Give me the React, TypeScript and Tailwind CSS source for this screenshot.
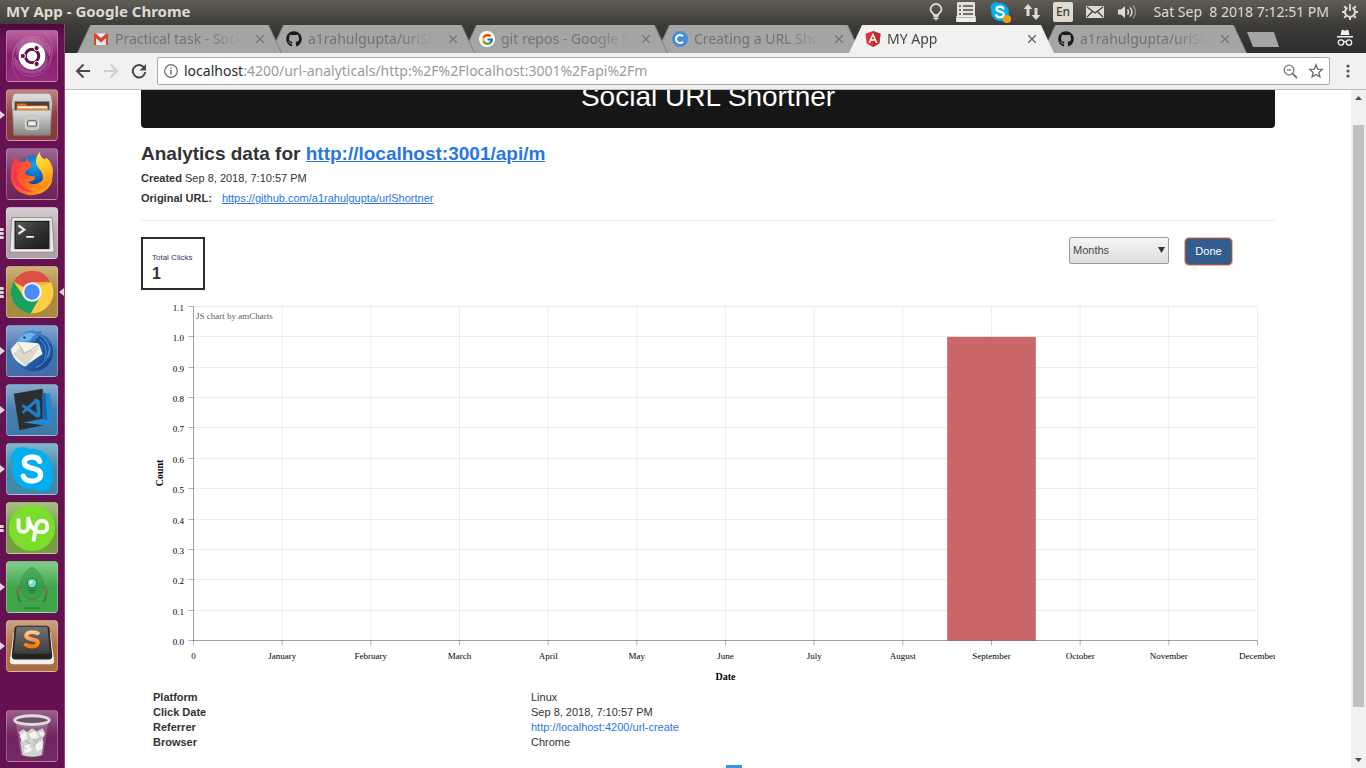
import React from "react";
import { FaGithub } from "react-icons/fa";
import { FcGoogle } from "react-icons/fc";

/* ---------- Launcher artwork, each on a 52 x 52 tile ---------- */

function DashArt() {
  return (
    <svg viewBox="0 0 52 52" className="size-full" aria-hidden="true">
      <g fill="none" stroke="#fff">
        <path d="M8 37C2 22 10 6 28 6c12 0 18 10 16 20" strokeOpacity=".22" />
        <path d="M44 15c6 16-2 31-18 32C14 47 8 38 8 28" strokeOpacity=".22" />
        <path d="M14 52C2 40 2 18 18 9" strokeOpacity=".16" />
        <path d="M38 0c12 10 14 30-4 42" strokeOpacity=".16" />
      </g>
      <path d="M10 26C8 12 20 5 32 8c9 3 13 11 12 18C36 10 20 8 10 26Z" fill="#fff" fillOpacity=".16" />
      <path d="M42 26c2 14-10 21-22 18C11 41 7 33 8 26c8 16 24 18 34 0Z" fill="#fff" fillOpacity=".16" />
      <circle cx="26" cy="27" r="14.4" fill="#3b0a31" fillOpacity=".3" />
      <circle cx="26" cy="26" r="14" fill="#fff" />
      <circle cx="26" cy="26" r="7" fill="none" stroke="#5e1448" strokeWidth="3.2" />
      <g fill="#5e1448" stroke="#fff" strokeWidth="1">
        <circle cx="16.5" cy="26" r="2.7" />
        <circle cx="30.8" cy="17.8" r="2.7" />
        <circle cx="30.8" cy="34.2" r="2.7" />
      </g>
    </svg>
  );
}

function FilesArt() {
  return (
    <svg viewBox="0 0 52 52" className="size-full" aria-hidden="true">
      <defs>
        <linearGradient id="cab" x1="0" y1="0" x2="0" y2="1">
          <stop offset="0" stopColor="#dededc" />
          <stop offset="1" stopColor="#868683" />
        </linearGradient>
      </defs>
      <path d="M9 4h34q2 0 3 3l1 8-2 31H7L5 15l1-8q1-3 3-3Z" fill="url(#cab)" />
      <path d="M8 12h36v12H8z" fill="#4c4038" />
      <path d="M10 15q0-1 1-1h8l2 2h21v7H10z" fill="#d96b22" />
      <path d="M11 17h31v5H11z" fill="#fff3dc" />
      <path d="M10 19h33v4H10z" fill="#e88a3b" />
      <path d="M6 21h40l-1 26H7z" fill="url(#cab)" stroke="#858582" strokeWidth=".6" />
      <rect x="19" y="29" width="14" height="12" rx="2.5" fill="#c2c2c0" stroke="#dcdcda" />
      <rect x="21.5" y="32" width="9" height="5.5" rx="1" fill="#efefed" stroke="#4c4c4a" />
    </svg>
  );
}

function FirefoxArt() {
  return (
    <svg viewBox="0 0 52 52" className="size-full" aria-hidden="true">
      <defs>
        <radialGradient id="ffGlobe" cx=".55" cy=".3" r=".7">
          <stop offset="0" stopColor="#12a5f4" />
          <stop offset="1" stopColor="#0b3c9c" />
        </radialGradient>
        <linearGradient id="ffBody" x1="0" y1=".3" x2="1" y2=".7">
          <stop offset="0" stopColor="#ff3647" />
          <stop offset=".5" stopColor="#ff6a1f" />
          <stop offset="1" stopColor="#ffb21a" />
        </linearGradient>
        <linearGradient id="ffTail" x1="0" y1="0" x2=".3" y2="1">
          <stop offset="0" stopColor="#fff36b" />
          <stop offset=".5" stopColor="#ffcb1f" />
          <stop offset="1" stopColor="#ff8a16" />
        </linearGradient>
      </defs>
      <circle cx="27" cy="23" r="16" fill="url(#ffGlobe)" />
      <path d="M9 8c1 2 2 4 4 6 2-1 4-1 6-1 0-2 1-4 2-5 0 3 1 5 3 6l2 4-4 3c-2 1-4 3-3 5 2 2 5 2 8 2 2 0 3 2 1 4-2 2-4 2-6 2 4 5 14 2 17-5 3-5 3-9 2-13 5 5 8 13 5 20-4 8-12 12-20 12C14 48 4 40 4 28c0-7 1-14 5-20Z" fill="url(#ffBody)" />
      <path d="M34 3c-5 6-5 12-1 17 4 4 5 8 4 13-2 6-8 9-14 8 8 5 19 1 23-8 4-10 1-19-5-24l-2 2c-3-2-5-5-5-8Z" fill="url(#ffTail)" />
      <path d="M9 21c-1 12 8 22 20 23-12 2-22-4-23-16 0-3 1-5 3-7Z" fill="#ed2460" fillOpacity=".6" />
    </svg>
  );
}

function TerminalArt() {
  return (
    <svg viewBox="0 0 52 52" className="size-full" aria-hidden="true">
      <defs>
        <linearGradient id="term" x1="0" y1="0" x2="1" y2="1">
          <stop offset="0" stopColor="#5c5c5a" />
          <stop offset=".5" stopColor="#333" />
          <stop offset="1" stopColor="#1b1b1b" />
        </linearGradient>
      </defs>
      <path d="M5 10h42l2 36H3z" fill="#e9e9e6" stroke="#7d7a7d" strokeWidth=".8" />
      <rect x="7" y="13" width="38" height="30" fill="#b4b4b1" />
      <rect x="8.5" y="14" width="35" height="28" fill="url(#term)" stroke="#111" />
      <path d="m12 18 6 4.500-6 4.500" fill="none" stroke="#f2f2f2" strokeWidth="2.2" />
      <path d="M20 30h8" stroke="#f2f2f2" strokeWidth="2" />
    </svg>
  );
}

function ChromeArt() {
  return (
    <svg viewBox="0 0 52 52" className="size-full" aria-hidden="true">
      <circle cx="26" cy="26" r="22" fill="#ffcd41" />
      <path d="M26 26 6.900 15A22 22 0 0 1 45.700 16H26Z" fill="#dd5144" />
      <path d="M17.300 31 6.900 15A22 22 0 0 0 25 48l9.700-17-8.700 5Z" fill="#1ba15f" />
      <path d="M26 16h19.700A22 22 0 0 1 25 48l9.700-17Z" fill="#ffcd41" />
      <path d="M26 16h19.700l-10 3.500Z" fill="#d6a52c" fillOpacity=".5" />
      <circle cx="26" cy="26" r="10.2" fill="#f4f4f4" />
      <circle cx="26" cy="26" r="8" fill="#4c8bf5" />
    </svg>
  );
}

function ThunderbirdArt() {
  return (
    <svg viewBox="0 0 52 52" className="size-full" aria-hidden="true">
      <defs>
        <linearGradient id="tb" x1="0" y1="0" x2="1" y2="1">
          <stop offset="0" stopColor="#5fa9e2" />
          <stop offset=".5" stopColor="#2a6fbe" />
          <stop offset="1" stopColor="#12306f" />
        </linearGradient>
      </defs>
      <path d="M12 13C15 6 25 2 31 6l5-1-1 3c8 2 13 10 13 18 0 12-9 21-20 21-10 0-20-7-22-17l3 3c-3-8-1-14 3-20Z" fill="url(#tb)" />
      <path d="m4 24 7-8 22 2 4 11-19 13C10 38 5 32 4 24Z" fill="#f5f3ec" />
      <path d="m6 29 9-8 3 6 16-5-14 20Z" fill="#ddd9ce" />
      <path d="m11 17 7 12 16-10" fill="none" stroke="#aaa69b" strokeWidth=".8" />
      <path d="M33 10c10 5 13 14 10 22-2 6-8 11-15 11 8-5 12-11 10-18-1-6-6-8-13-8 3-1 6-2 8-7Z" fill="#1d519a" />
      <path d="M37 12c7 6 9 14 6 21M34 14c7 5 8 13 5 20M40 35c-2 4-6 7-10 8M45 22l-4 13" fill="none" stroke="#5ba3dd" strokeWidth=".9" />
      <path d="M12 15c3-7 12-10 18-6-4 1-4 4-7 6-3 2-8 0-11 0Z" fill="#6bb6e9" />
      <circle cx="18" cy="12" r="1.2" fill="#102c5c" />
    </svg>
  );
}

function CodeArt() {
  return (
    <svg viewBox="0 0 52 52" className="size-full" aria-hidden="true">
      <path d="m7 9 30-5 4 37-28 6Z" fill="#2e2e30" />
      <path d="m37 8 8 1 3 29-8 4-23-3 20-4Z" fill="#2489d4" />
      <path d="m37 8 3 1 2 28-5-2Z" fill="#1767a8" />
      <path d="m30 14 4 2 1 17-4 1-16-12 2-2 14 9-1-10-13 11-2-2Z" fill="#1c7fca" />
    </svg>
  );
}

function SkypeArt() {
  return (
    <svg viewBox="0 0 52 52" className="size-full" aria-hidden="true">
      <circle cx="16" cy="15" r="12" fill="#00aff0" />
      <circle cx="36" cy="37" r="12" fill="#00aff0" />
      <circle cx="26" cy="26" r="21" fill="#00aff0" />
      <path d="M34 18c-1-3-4-4.500-8-4.500-4.500 0-8 2-8 5.500 0 8.500 17 4 17 13 0 4-4 6.500-9 6.500s-8-2-9-5" fill="none" stroke="#fff" strokeWidth="5.5" strokeLinecap="round" />
    </svg>
  );
}

function UpworkArt() {
  return (
    <svg viewBox="0 0 52 52" className="size-full" aria-hidden="true">
      <circle cx="26" cy="26" r="24" fill="#7ade2a" />
      <g fill="none" stroke="#fff" strokeWidth="4" strokeLinejoin="round">
        <path d="M12 16v8.500c0 3.500 2 5.500 5 5.500s5.200-2 5.200-5.500V16c1.500 6 3.500 10 6.800 12.300 2.500 1.700 4.800 2.200 7 2.200 3.400 0 6-2.500 6-6s-2.300-6-5.600-6c-3.600 0-5.600 2.700-6.400 6.700L27.500 40" />
      </g>
    </svg>
  );
}

function RobotArt() {
  return (
    <svg viewBox="0 0 52 52" className="size-full" aria-hidden="true">
      <ellipse cx="26" cy="48" rx="9" ry="1.3" fill="#2f8a3f" />
      <path d="M14 25c-4 3-4 9-1 12M38 25c4 3 4 9 1 12" fill="none" stroke="#77704a" strokeWidth="2.6" />
      <path d="M26 5c8 5 12 12 12 19 0 9-5 15-12 15s-12-6-12-15c0-7 4-14 12-19Z" fill="#2f9a43" fillOpacity=".55" stroke="#379648" strokeOpacity=".6" />
      <path d="M14.500 25c7 4 16 4 23 0" fill="none" stroke="#328f44" />
      <path d="M21 37c2 4 8 4 10 0-3 2-7 2-10 0Z" fill="#77704a" />
      <circle cx="26" cy="22" r="5.5" fill="#2a7a4c" />
      <circle cx="26" cy="22" r="4.2" fill="#77dcc0" />
      <circle cx="25" cy="21" r="1.5" fill="#e0fff4" />
      <path d="M22 29.500h8M23.500 31.500h5" stroke="#1f6f33" />
      <path d="M12 36q-1 4 3 5M40 36q1 4-3 5" fill="none" stroke="#2b8a3e" strokeWidth="2" />
    </svg>
  );
}

function SublimeArt() {
  return (
    <svg viewBox="0 0 52 52" className="size-full" aria-hidden="true">
      <defs>
        <linearGradient id="key" x1="0" y1="0" x2="0" y2="1">
          <stop offset="0" stopColor="#737373" />
          <stop offset="1" stopColor="#3c3c3c" />
        </linearGradient>
        <linearGradient id="ess" x1="0" y1="0" x2="0" y2="1">
          <stop offset="0" stopColor="#ffc98a" />
          <stop offset="1" stopColor="#ff7a00" />
        </linearGradient>
      </defs>
      <path d="M7 12h38l4 29q0 4-4 4H7q-4 0-4-4Z" fill="#f3f3f3" />
      <path d="M8 7q1-2 3-2h30q2 0 3 2l3 29q0 4-3 4H8q-3 0-3-4Z" fill="#232323" />
      <path d="M10 6h32l3 28H7Z" fill="url(#key)" />
      <path d="M33 14c-2-3-12-4-13 1-1 5 13 3 12 8-1 5-10 4-14 1" fill="none" stroke="url(#ess)" strokeWidth="4" />
    </svg>
  );
}

function TrashArt() {
  return (
    <svg viewBox="0 0 52 52" className="size-full" aria-hidden="true">
      <path d="M9 11h34l-5 35q-12 4-24 0Z" fill="#e8dbe6" fillOpacity=".22" />
      <path d="m12 22 5-3 4 3 5-4 5 3 6-3 3 6-3 4 1 5-2 13q-10 3-20 0l-2-12 1-7Z" fill="#d2d2d0" />
      <path d="m13 26 6-5 2 7-5 4Zm10-2 6-3 4 6-7 3Zm-6 13 6-3 3 7-7 3Zm12-2 7-4 1 8-6 3ZM32 23l6-2v6Z" fill="#f4f4f2" />
      <path d="m19 31 5 3m2-5 5 3-3 5m-12-1 4 4m11-9 5-4" fill="none" stroke="#a8a8a6" />
      <ellipse cx="26" cy="9.5" rx="18" ry="4.5" fill="#71506a" stroke="#dededc" strokeWidth="3" />
      <path d="M10 14q16 6 32 0" fill="none" stroke="#8d8d8b" />
    </svg>
  );
}

type Tile = {
  name: string;
  art: () => React.JSX.Element;
  tone: string;
  windows: number;
  active?: boolean;
};

const tiles: Tile[] = [
  { name: "Dash", art: DashArt, tone: "from-[#b9629f] via-[#8c1f72] to-[#932b7c]", windows: 0 },
  { name: "Files", art: FilesArt, tone: "from-[#c08484] via-[#8f3d45] to-[#8a3a44]", windows: 1 },
  { name: "Firefox", art: FirefoxArt, tone: "from-[#9d6a94] via-[#7a3469] to-[#6d2259]", windows: 0 },
  { name: "Terminal", art: TerminalArt, tone: "from-[#d5cdd4] via-[#b5a8b3] to-[#ada0ab]", windows: 3 },
  { name: "Google Chrome", art: ChromeArt, tone: "from-[#cbb279] via-[#ad8c40] to-[#a98a42]", windows: 3, active: true },
  { name: "Thunderbird", art: ThunderbirdArt, tone: "from-[#86a8cf] via-[#4675ae] to-[#3f6ca6]", windows: 1 },
  { name: "Visual Studio Code", art: CodeArt, tone: "from-[#84abcb] via-[#4580ae] to-[#3d78a8]", windows: 1 },
  { name: "Skype", art: SkypeArt, tone: "from-[#83b3c9] via-[#448bab] to-[#4187a7]", windows: 1 },
  { name: "Upwork", art: UpworkArt, tone: "from-[#a9bf81] via-[#779f44] to-[#769c46]", windows: 2 },
  { name: "Robot", art: RobotArt, tone: "from-[#83cb8c] via-[#3fa64e] to-[#3fa548]", windows: 1 },
  { name: "Sublime Text", art: SublimeArt, tone: "from-[#cfa284] via-[#ad7345] to-[#a86d42]", windows: 1 },
];

function LauncherTile({ tile }: { tile: Tile }) {
  const Art = tile.art;
  return (
    <div className="relative flex w-full pl-1.5">
      {tile.windows > 0 && (
        <span className="absolute inset-y-0 left-0 flex flex-col justify-center gap-px">
          {tile.windows === 1 ? (
            <span className="h-2 w-[5px] bg-[#dcd6da] [clip-path:polygon(0_0,100%_50%,0_100%)]" />
          ) : (
            Array.from({ length: tile.windows }, (_, i) => (
              <span key={i} className="h-[3px] w-1 rounded-r-sm bg-[#dcd6da]" />
            ))
          )}
        </span>
      )}
      <button
        type="button"
        aria-label={tile.name}
        className={`size-[52px] overflow-hidden rounded border border-white/25 bg-linear-to-b ${tile.tone}`}
      >
        <Art />
      </button>
      {tile.active && (
        <span className="absolute inset-y-0 right-0 flex items-center">
          <span className="h-2 w-[5px] bg-[#dcd6da] [clip-path:polygon(100%_0,0_50%,100%_100%)]" />
        </span>
      )}
    </div>
  );
}

function Launcher() {
  return (
    <nav aria-label="Launcher" className="flex w-[65px] shrink-0 flex-col gap-[7px] border-r border-[#8a4a78] bg-linear-to-b from-[#4a0c3b] via-[#651152] via-2% to-[#651152] py-1.5">
      {tiles.map((t) => (
        <LauncherTile key={t.name} tile={t} />
      ))}
      <div className="mt-auto">
        <LauncherTile tile={{ name: "Trash", art: TrashArt, tone: "from-[#9b5e8d] via-[#72235f] to-[#742a63]", windows: 0 }} />
      </div>
    </nav>
  );
}

/* ---------- Desktop panel ---------- */

function DesktopPanel() {
  return (
    <header className="flex h-6 shrink-0 items-center justify-between bg-linear-to-b from-[#5f5d53] to-[#3e3d39] pr-[7px] pl-1.5 font-['Noto_Sans',sans-serif] text-sm text-[#dfdbd2]">
      <span className="text-[15px] font-bold whitespace-nowrap">MY App - Google Chrome</span>
      <div className="flex items-center gap-3">
        <svg viewBox="0 0 14 18" className="h-[18px] w-3.5" fill="none" stroke="currentColor" aria-hidden="true">
          <path d="M5 12C4 10 1.500 9 1.500 6.500a5.500 5.500 0 0 1 11 0C12.500 9 10 10 9 12Z" strokeWidth="1.8" />
          <path d="M4.500 13.500h5M4.500 15.500h5" strokeWidth="1.5" />
          <path d="M6 17h2" />
        </svg>
        <svg viewBox="0 0 22 20" className="h-5 w-[22px]" aria-hidden="true">
          <path d="M3 0h16q1 0 1 1v13H2V1q0-1 1-1Z" fill="#e4e1db" />
          <path d="M1.500 14h19l.5 5q0 1-1 1H2q-1 0-1-1Z" fill="#f0eeea" />
          <path d="M4 4h2M4 8h2M4 12h2M8 4h10M8 8h10M8 12h10" stroke="#4c4b46" strokeWidth="1.4" />
          <path d="M3 15.500h16" stroke="#b9b6b0" />
        </svg>
        <span className="relative flex size-[22px]">
          <SkypeArt />
          <span className="absolute right-0 bottom-0 size-2 rounded-full bg-[#f8a00c]" />
        </span>
        <svg viewBox="0 0 18 18" className="size-[18px]" fill="currentColor" aria-hidden="true">
          <path d="M5 1 9.500 6H6.500v7h-3V6H.5ZM13 17l4.500-5h-3V5h-3v7h-3Z" />
        </svg>
        <span className="flex h-5 w-5 items-center justify-center rounded-xs bg-[#dfdbd2] text-xs font-medium text-[#3e3d39]">En</span>
        <svg viewBox="0 0 20 14" className="h-3.5 w-5" aria-hidden="true">
          <rect x="1" y="1" width="18" height="12" rx="1" fill="#dfdbd2" />
          <path d="m2 2 8 6 8-6M2 12l5.500-5.500M18 12l-5.500-5.500" fill="none" stroke="#3e3d39" strokeWidth="1.2" />
        </svg>
        <svg viewBox="0 0 21 16" className="h-4 w-[21px]" fill="none" stroke="currentColor" aria-hidden="true">
          <path d="M1 5.500h3l4-3.500v12l-4-3.500H1Z" fill="currentColor" stroke="none" />
          <path d="M10.500 5.500q2 2.500 0 5" strokeWidth="1.5" />
          <path d="M13 3.500q4 4.500 0 9" strokeWidth="1.5" />
          <path d="M16 1.500q5 6.500 0 13" strokeWidth="1.5" opacity=".45" />
        </svg>
        <time className="min-w-[179px] text-right whitespace-pre">Sat Sep  8 2018 7:12:51 PM</time>
        <svg viewBox="0 0 18 18" className="size-[18px]" fill="none" stroke="currentColor" aria-hidden="true">
          <path d="M6.500 4.600a5 5 0 1 0 5 0" strokeWidth="2" />
          <path d="M9 1v7" strokeWidth="1.8" />
          <path d="M3.200 3.200l1.800 1.800M14.800 3.200 13 5M1 9h2.500M14.500 9H17M3.200 14.800 5 13M14.800 14.800 13 13M9 14.500V17" strokeWidth="2" />
        </svg>
      </div>
    </header>
  );
}

/* ---------- Browser chrome ---------- */

function GmailIcon() {
  return (
    <svg viewBox="0 0 16 16" className="size-4" aria-hidden="true">
      <path d="M1 3h14v11H1z" fill="#e9e5e2" />
      <path d="M1 14V4l7 6 7-6v10h-2V7l-5 4.500L3 7v7Z" fill="#d64538" />
      <path d="M1 2.500h2l5 4.500 5-4.500h2V5l-7 6-7-6Z" fill="#d64538" />
      <path d="m3 2.500 5 4 5-4Z" fill="#f3f0ee" />
    </svg>
  );
}

function GoogleIcon() {
  return (
    <span className="flex size-4 items-center justify-center rounded-full bg-white">
      <FcGoogle className="size-[13px]" />
    </span>
  );
}

function CodementorIcon() {
  return (
    <svg viewBox="0 0 16 16" className="size-4" aria-hidden="true">
      <circle cx="8" cy="8" r="8" fill="#4a8cd6" />
      <path d="M11 5.300a4 4 0 1 0 0 5.400" fill="none" stroke="#fff" strokeWidth="2" />
    </svg>
  );
}

function AngularIcon() {
  return (
    <svg viewBox="0 0 16 16" className="size-4" aria-hidden="true">
      <path d="m8 0 7.500 2.700-1.200 9.800L8 16l-6.300-3.500L.5 2.700Z" fill="#dd3237" />
      <path d="m8 0 7.500 2.700-1.200 9.800L8 16Z" fill="#b92e33" />
      <path d="M8 1.800 3.400 12h1.700l1-2.300h3.800l1 2.300h1.700Zm0 3.300 1.300 3.200H6.700Z" fill="#fff" />
    </svg>
  );
}

function OctocatIcon() {
  return <FaGithub className="size-4 text-[#1b1b1b]" />;
}

type Tab = { title: string; icon: () => React.JSX.Element; active?: boolean; layer: string };

const tabs: Tab[] = [
  { title: "Practical task - Social", icon: GmailIcon, layer: "z-[5]" },
  { title: "a1rahulgupta/urlShortner", icon: OctocatIcon, layer: "z-[4]" },
  { title: "git repos - Google Search", icon: GoogleIcon, layer: "z-[3]" },
  { title: "Creating a URL Shortener", icon: CodementorIcon, layer: "z-[2]" },
  { title: "MY App", icon: AngularIcon, active: true, layer: "z-10" },
  { title: "a1rahulgupta/urlShortner", icon: OctocatIcon, layer: "z-[1]" },
];

function BrowserTab({ tab }: { tab: Tab }) {
  const Icon = tab.icon;
  return (
    <div
      className={`relative -ml-3 flex h-7 w-[205px] shrink-0 px-px [clip-path:polygon(13px_0,192px_0,100%_100%,0_100%)] ${tab.layer} ${tab.active ? "bg-[#f1f1ef]" : "bg-[#7f7f7d]"}`}
    >
      <div
        className={`flex min-w-0 flex-1 items-center gap-1.5 pr-3.5 pl-[15px] [clip-path:polygon(13px_0,190px_0,100%_100%,0_100%)] ${tab.active ? "bg-[#f1f1ef] text-[#454545]" : "bg-[#a5a5a3] text-[#737372]"}`}
      >
        <Icon />
        <span className="min-w-0 flex-1 overflow-hidden whitespace-nowrap [mask-image:linear-gradient(to_right,black_calc(100%-40px),transparent_calc(100%-4px))]">
          {tab.title}
        </span>
        <button type="button" aria-label={`Close ${tab.title}`} className="flex size-3.5 items-center justify-center">
          <svg viewBox="0 0 8 8" className="size-2" stroke={tab.active ? "#666" : "#777"} strokeWidth="1.4" aria-hidden="true">
            <path d="m0 0 8 8M8 0 0 8" />
          </svg>
        </button>
      </div>
    </div>
  );
}

function TabStrip() {
  return (
    <div className="flex h-[29px] shrink-0 items-end bg-linear-to-b from-[#3d3c3a] to-[#2d2d2c] pr-3 pl-6 font-['Noto_Sans',sans-serif] text-sm">
      {tabs.map((t, i) => (
        <BrowserTab key={i} tab={t} />
      ))}
      <button type="button" aria-label="New tab" className="mb-1.5 h-[15px] w-8 bg-[#a5a5a3] [clip-path:polygon(0_0,27px_0,100%_100%,6px_100%)]" />
      <svg viewBox="0 0 18 18" className="mb-1.5 ml-auto size-[18px]" aria-hidden="true">
        <path d="M5.500 1.500q.3-1 1.500-.5l2 .7 2-.7q1.200-.5 1.500.5L13.500 6h-9Z" fill="#f1f1ef" />
        <path d="M1 7h16v1.500H1z" fill="#f1f1ef" />
        <g fill="none" stroke="#f1f1ef" strokeWidth="1.3">
          <circle cx="5" cy="13.5" r="2.7" />
          <circle cx="13" cy="13.5" r="2.7" />
          <path d="M7.500 13q1.500-1 3 0" />
        </g>
      </svg>
    </div>
  );
}

function Toolbar() {
  return (
    <div className="flex h-[37px] shrink-0 items-center gap-2.5 border-b border-[#bfbfbd] bg-[#f1f1ef] pr-2.5 pl-2.5 font-['Noto_Sans',sans-serif] text-sm">
      <div className="flex gap-3">
        <button type="button" aria-label="Back">
          <svg viewBox="0 0 16 16" className="size-4" fill="none" stroke="#4a4a4a" strokeWidth="2" aria-hidden="true">
            <path d="M15 8H2.500M8.500 1.500 2 8l6.500 6.500" />
          </svg>
        </button>
        <button type="button" aria-label="Forward">
          <svg viewBox="0 0 16 16" className="size-4" fill="none" stroke="#cfcfcd" strokeWidth="2" aria-hidden="true">
            <path d="M1 8h12.500M7.500 1.500 14 8l-6.500 6.500" />
          </svg>
        </button>
        <button type="button" aria-label="Reload">
          <svg viewBox="0 0 16 16" className="size-4" fill="none" stroke="#4a4a4a" strokeWidth="2" aria-hidden="true">
            <path d="M13 4.500A6.200 6.200 0 1 0 14.200 9" />
            <path d="M15 1v6.500H8.500Z" fill="#4a4a4a" stroke="none" />
          </svg>
        </button>
      </div>
      <div className="flex h-7 min-w-0 flex-1 items-center gap-1.5 rounded-xs border border-[#a9a9a7] bg-white pr-[5px] pl-1.5">
        <svg viewBox="0 0 14 14" className="size-3.5 shrink-0" aria-hidden="true">
          <circle cx="7" cy="7" r="6.3" fill="none" stroke="#6b6b6b" strokeWidth="1.2" />
          <path d="M7 6v4.500M7 3.400v1.400" stroke="#6b6b6b" strokeWidth="1.5" />
        </svg>
        <div className="relative flex min-w-0 flex-1">
          <div aria-hidden="true" className="whitespace-nowrap text-[#9a9a9a]">
            <span className="text-[#2b2b2b]">localhost</span>:4200/url-analyticals/http:%2F%2Flocalhost:3001%2Fapi%2Fm
          </div>
          <input
            aria-label="Address"
            defaultValue="localhost:4200/url-analyticals/http:%2F%2Flocalhost:3001%2Fapi%2Fm"
            className="absolute inset-0 w-full bg-transparent text-transparent outline-none"
          />
        </div>
        <button type="button" aria-label="Zoom level">
          <svg viewBox="0 0 15 15" className="size-[15px]" fill="none" stroke="#757575" strokeWidth="1.3" aria-hidden="true">
            <circle cx="6" cy="6" r="4.8" />
            <path d="M3.800 6h4.400" />
            <path d="m9.500 9.500 4.500 4.500" strokeWidth="1.8" />
          </svg>
        </button>
        <button type="button" aria-label="Bookmark" className="ml-1">
          <svg viewBox="0 0 16 16" className="size-4" fill="none" stroke="#6b6b6b" strokeWidth="1.3" aria-hidden="true">
            <path d="m8 1.800 1.700 4.300 4.600.3-3.500 3 1.100 4.500L8 11.400l-3.900 2.500 1.100-4.500-3.500-3 4.600-.3Z" />
          </svg>
        </button>
      </div>
      <button type="button" aria-label="Menu" className="flex w-4 justify-center">
        <svg viewBox="0 0 4 14" className="h-3.5 w-1" fill="#555" aria-hidden="true">
          <circle cx="2" cy="2" r="1.6" />
          <circle cx="2" cy="7" r="1.6" />
          <circle cx="2" cy="12" r="1.6" />
        </svg>
      </button>
    </div>
  );
}

function PageScrollbar() {
  return (
    <div aria-hidden="true" className="flex w-[15px] shrink-0 flex-col items-center bg-[#f1f1f1] px-0.5">
      <span className="flex h-4 items-center">
        <span className="h-1 w-[7px] bg-[#505050] [clip-path:polygon(50%_0,100%_100%,0_100%)]" />
      </span>
      <span className="flex-[19]" />
      <span className="w-full flex-[582] bg-[#c1c1c1]" />
      <span className="flex-[45]" />
      <span className="flex h-4 items-center">
        <span className="h-1 w-[7px] bg-[#505050] [clip-path:polygon(0_0,100%_0,50%_100%)]" />
      </span>
    </div>
  );
}

/* ---------- Analytics page ---------- */

const months = [
  "0", "January", "February", "March", "April", "May", "June",
  "July", "August", "September", "October", "November", "December",
];
const clicks: Record<string, number> = { September: 1 };

const LEFT = 52.5;
const RIGHT = 1116.5;
const TOP = 8.5;
const BOTTOM = 342.5;
const MAX = 1.1;
const stepX = (RIGHT - LEFT) / 12;
const yOf = (v: number) => BOTTOM - (v / MAX) * (BOTTOM - TOP);

function ClicksChart() {
  return (
    <svg
      viewBox="0 0 1134 388"
      role="img"
      aria-label="Clicks per month"
      className="block w-full font-['Liberation_Serif',serif] text-[9px]"
    >
      {Array.from({ length: 12 }, (_, i) => {
        const y = Math.floor(yOf(i / 10) + 0.01) + 0.5;
        return (
          <g key={i}>
            <path d={`M${LEFT} ${y}H${RIGHT}`} stroke="#000" strokeOpacity=".07" />
            <path d={`M${LEFT - 5} ${y}H${LEFT}`} stroke="#000" strokeOpacity=".3" />
            <text x="43" y={y + 4} textAnchor="end">{(i / 10).toFixed(1)}</text>
          </g>
        );
      })}
      {months.map((m, i) => {
        const x = LEFT + i * stepX;
        const value = clicks[m] ?? 0;
        return (
          <g key={m}>
            <path d={`M${x} ${TOP}V${BOTTOM}`} stroke="#000" strokeOpacity=".07" />
            <path d={`M${x} ${BOTTOM}v5`} stroke="#000" strokeOpacity=".3" />
            {value > 0 && (
              <rect x={x - stepX / 2} y={yOf(value)} width={stepX} height={BOTTOM - yOf(value)} fill="#c45456" fillOpacity=".89" />
            )}
            <text x={x} y="361" textAnchor="middle">{m}</text>
          </g>
        );
      })}
      <path d={`M${LEFT} ${TOP}V${BOTTOM}H${RIGHT}`} fill="none" stroke="#000" strokeOpacity=".32" />
      <text x="55" y="21" fill="#000" fillOpacity=".7">JS chart by amCharts</text>
      <text x="0" y="0" textAnchor="middle" transform="translate(22 175) rotate(-90)" className="text-[10px] font-bold">Count</text>
      <text x={(LEFT + RIGHT) / 2} y="382" textAnchor="middle" className="text-[10px] font-bold">Date</text>
    </svg>
  );
}

function ClickDetails() {
  return (
    <table className="w-full table-fixed text-left leading-[15px]">
      <tbody>
        <tr>
          <th scope="row" className="w-1/3 px-3">Platform</th>
          <td className="px-3">Linux</td>
        </tr>
        <tr>
          <th scope="row" className="px-3">Click Date</th>
          <td className="px-3">Sep 8, 2018, 7:10:57 PM</td>
        </tr>
        <tr>
          <th scope="row" className="px-3">Referrer</th>
          <td className="px-3">
            <a href="http://localhost:4200/url-create" className="text-[#2a76dd]">http://localhost:4200/url-create</a>
          </td>
        </tr>
        <tr>
          <th scope="row" className="px-3">Browser</th>
          <td className="px-3">Chrome</td>
        </tr>
      </tbody>
    </table>
  );
}

function AnalyticsPage() {
  return (
    <main className="min-w-0 flex-1 overflow-hidden bg-white px-[76px] font-['Liberation_Sans',Arial,sans-serif] text-[11px] text-[#333]">
      <div className="-mt-6 rounded bg-[#161616] py-[11px] text-center text-[28px] leading-10 text-white">
        Social URL Shortner
      </div>
      <section className="flex flex-col border-b border-[#ebebeb] pt-3.5 pb-3">
        <h1 className="text-[19px] leading-6 font-bold">
          Analytics data for{" "}
          <a href="http://localhost:3001/api/m" className="text-[#2a76dd] underline">http://localhost:3001/api/m</a>
        </h1>
        <p className="pt-0.5 leading-5"><strong>Created</strong> Sep 8, 2018, 7:10:57 PM</p>
        <p className="flex gap-2.5 leading-5">
          <strong>Original URL:</strong>
          <a href="https://github.com/a1rahulgupta/urlShortner" className="text-[#2a76dd] underline">https://github.com/a1rahulgupta/urlShortner</a>
        </p>
      </section>
      <div className="flex items-start justify-between pt-4 pb-2">
        <div className="flex h-[53px] w-16 flex-col justify-end border-2 border-[#2d2d2d] px-[9px] pb-1">
          <span className="text-[8px] leading-3 whitespace-nowrap text-[#2f3c63]">Total Clicks</span>
          <span className="text-base leading-5 font-bold">1</span>
        </div>
        <form className="flex items-start gap-4 pr-[43px]" onSubmit={(e) => e.preventDefault()}>
          <div className="relative">
            <select
              aria-label="Period"
              defaultValue="Months"
              className="h-[27px] w-[100px] appearance-none rounded-xs border border-[#9a9a9a] bg-linear-to-b from-[#f6f6f6] to-[#dddddd] px-[3px] text-[#444]"
            >
              <option>Months</option>
              <option>Days</option>
              <option>Years</option>
            </select>
            <span aria-hidden="true" className="pointer-events-none absolute top-2.5 right-1 h-1.5 w-[7px] bg-[#333] [clip-path:polygon(0_0,100%_0,50%_100%)]" />
          </div>
          <button type="submit" className="mt-px h-[27px] w-[47px] rounded border border-[#8a5a50] bg-[#325d8e] text-white ring-1 ring-[#f5b396]">
            Done
          </button>
        </form>
      </div>
      <ClicksChart />
      <div className="pt-1">
        <ClickDetails />
      </div>
      <div className="flex justify-center pt-[15px] pl-[52px]">
        <span className="h-6 w-4 bg-[#3b94e6]" />
      </div>
    </main>
  );
}

export default function App() {
  return (
    <div className="flex h-screen flex-col overflow-hidden">
      <DesktopPanel />
      <div className="flex min-h-0 flex-1">
        <Launcher />
        <div className="flex min-w-0 flex-1 flex-col">
          <TabStrip />
          <Toolbar />
          <div className="flex min-h-0 flex-1">
            <AnalyticsPage />
            <PageScrollbar />
          </div>
        </div>
      </div>
    </div>
  );
}
